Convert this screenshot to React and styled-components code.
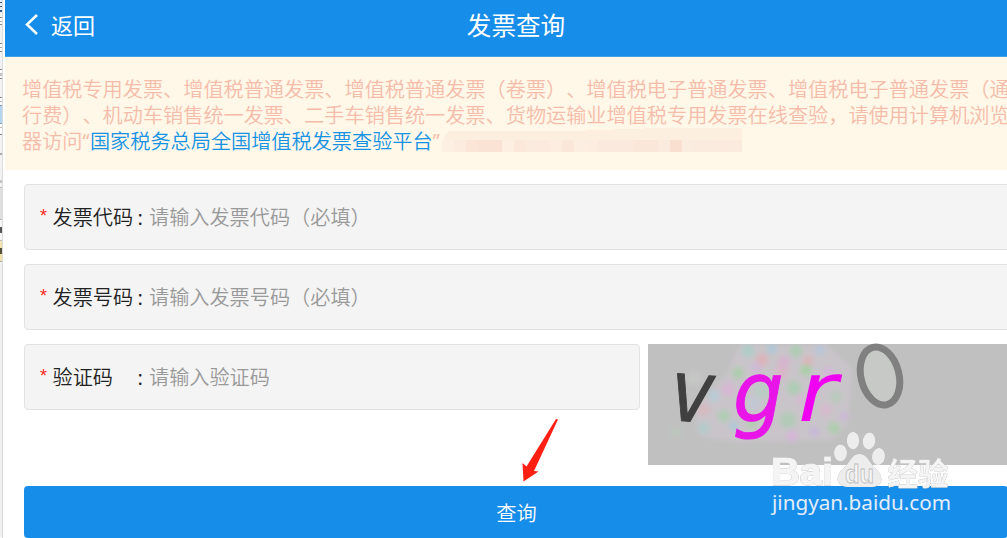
import React from 'react';
import styled, { createGlobalStyle } from 'styled-components';

const BLUE = '#178dea';

const GlobalStyle = createGlobalStyle`
  body {
    margin: 0;
    overflow: hidden;
    background: #fff;
    font-family: "Noto Sans CJK SC", sans-serif;
    font-kerning: none;
    text-spacing-trim: space-all;
  }

  * {
    box-sizing: border-box;
  }
`;

const Screen = styled.div`
  position: relative;
  display: flex;
  width: 1007px;
  height: 538px;
  overflow: hidden;
`;

const Edge = styled.aside`
  display: flex;
  flex-direction: column;
  flex: 0 0 3px;
  width: 3px;
  margin-right: 2px;
  overflow: hidden;
  border-right: 1px solid #dcdcdc;
`;

const EdgeCell = styled.i`
  flex: 0 0 auto;
  height: ${p => p.h}px;
  background: ${p => p.color};
`;

const Page = styled.main`
  flex: 0 0 1002px;
  width: 1002px;
  white-space: nowrap;
`;

const Header = styled.header`
  display: grid;
  grid-template-columns: 200px 1fr 200px;
  align-items: center;
  height: 57px;
  padding: 0 0 8px 20px;
  border-bottom: 1px solid #409fe9;
  background: ${BLUE};
  color: #fff;
`;

const Back = styled.a`
  display: flex;
  align-items: center;
  gap: 12px;
  font-size: 22px;
  line-height: 30px;
`;

const Title = styled.h1`
  margin: 0;
  font-size: 24.6px;
  font-weight: 400;
  line-height: 34px;
  text-align: center;
`;

const Notice = styled.section`
  height: 113px;
  padding: 19px 0 0 17px;
  background: #fff7e8;
  color: #f6bcaa;
  font-size: 20.16px;
  font-weight: 350;
  line-height: 26px;
`;

const NoticeLine = styled.div`
  display: flex;
  height: 26px;
`;

const Quote = styled.span`
  width: 7.5px;
  font-family: "Open Sans", sans-serif;
  font-size: 20px;
  font-weight: 400;
`;

const PlatformLink = styled.a`
  color: #1692e2;
`;

const Redacted = styled.svg`
  margin: -1px 0 0 2px;
`;

const Form = styled.form`
  display: flex;
  flex-direction: column;
  gap: 14px;
  padding: 14px 0 0 19px;
`;

const Field = styled.label`
  display: flex;
  flex: none;
  align-items: center;
  width: ${p => p.width || '1000px'};
  height: 66px;
  padding: 0 0 0 15px;
  border: 1px solid #e2e2e2;
  border-radius: 4px;
  background: #f4f4f4;
  font-size: 20.16px;
  font-weight: 350;
  line-height: 30px;
`;

const Star = styled.span`
  width: 12.5px;
  padding-bottom: 3px;
  color: #fb2a20;
  font-family: "Liberation Sans", sans-serif;
  font-size: 18px;
`;

const Label = styled.span`
  width: 85px;
  color: #222;
`;

const Colon = styled.span`
  width: 11.5px;
  color: #222;
`;

const Placeholder = styled.span`
  color: #999;
`;

const CodeRow = styled.div`
  display: flex;
  gap: 8px;
  height: 121px;
`;

const Captcha = styled.svg`
  flex: none;
  overflow: visible;
  background: #c0c0c0;
`;

const Submit = styled.button`
  width: 984px;
  height: 52px;
  margin-top: 7px;
  padding: 2px 0 0 1px;
  border: 0;
  border-radius: 4px;
  background: ${BLUE};
  color: #fff;
  font: 350 20.2px/50px "Noto Sans CJK SC", sans-serif;
`;

const Arrow = styled.svg`
  position: absolute;
  left: 520px;
  top: 416px;
`;

const Watermark = styled.svg`
  position: absolute;
  left: 766px;
  top: 424px;
`;

const Outlined = styled.g`
  filter: drop-shadow(0 0 0.7px #999);
`;

// slice of the window that shows behind the page
const edge = [
  [2, '#e9eef4'], [1, '#365f91'], [3, '#e9eef4'], [1, '#365f91'], [3, '#e9eef4'], [2, '#365f91'],
  [5, '#f2f2f2'], [1, '#888'], [3, '#fff'], [1, '#aaa'], [2, '#fff'], [1, '#888'],
  [18, '#f2f2f2'], [1, '#888'], [3, '#fff'], [1, '#aaa'], [3, '#fff'], [1, '#888'],
  [17, '#f2f2f2'], [1, '#888'], [3, '#fff'], [3, '#c4c4c4'], [2, '#fff'], [1, '#888'],
  [18, '#f2f2f2'], [1, '#888'], [3, '#fff'], [1, '#bbb'], [3, '#fff'], [1, '#7e9cb5'],
  [17, '#b5d4ee'], [1, '#7e9cb5'], [3, '#fff'], [1, '#bbb'], [6, '#fff'], [1, '#888'],
  [18, '#f2f2f2'], [2, '#aaa'], [25, '#f2f2f2'], [3, '#c4c4c4'], [4, '#f2f2f2'], [1, '#bbb'],
  [31, '#dedede'], [1, '#bbb'], [7, '#f5f5f5'], [6, '#555'], [7, '#f5f5f5'], [1, '#bbb'],
  [7, '#f2e3ad'], [6, '#554f38'], [7, '#f2e3ad'], [1, '#aaa'], [275, '#f0f0f0'],
];

const mosaic = [
  '#fcf0e2', '#fcecdf', '#fae5d7', '#fae2d4', '#fae2d4', '#fdf0e3', '#fbe8db', '#fbebde', '#fbeadd',
  '#fcede0', '#fbe7da', '#fceee1', '#fcede0', '#fbe9dd', '#fbe9dd', '#fbe9dd', '#fbe7d9', '#fbe7da',
  '#fbebde', '#f9dfd0', '#fbece0', '#fbebde', '#fbebde', '#fbeadd', '#fbebde',
];

// colour speckle around the captcha letters: x, y, radius, colour
const speckles = [
  [100, 7, 6, '#a5cfc6'], [114, 16, 6, '#e0aeb6'], [124, 5, 5, '#a9c8dc'], [136, 18, 6, '#d9b0cf'],
  [148, 7, 6, '#a6d0ac'], [160, 17, 5, '#e2afb5'], [172, 6, 5, '#b4c8dd'], [90, 29, 6, '#a5d1a8'],
  [108, 24, 5, '#cfb6dc'], [134, 28, 6, '#ddb3c8'], [158, 26, 6, '#a2d2a2'], [180, 28, 6, '#d5b6d8'],
  [80, 45, 7, '#d8b4d5'], [114, 47, 8, '#b6cec3'], [106, 60, 7, '#c0c9d6'], [146, 44, 7, '#a8cfb0'],
  [154, 56, 6, '#d8b6d5'], [188, 53, 6, '#b4ccb8'], [56, 66, 6, '#d9b6bd'], [66, 52, 6, '#b5cdd8'],
  [76, 72, 6, '#a8d0ae'], [86, 82, 5, '#aac9d8'], [104, 79, 5, '#a6d2a6'], [140, 76, 8, '#abcdb3'],
  [56, 84, 6, '#afccca'], [144, 92, 6, '#d6b4d8'], [178, 66, 6, '#dab6d0'], [186, 84, 6, '#a7cfa7'],
  [166, 88, 5, '#c8b4dc'], [28, 88, 6, '#bcc8be'], [46, 34, 7, '#c7c9c7'], [196, 72, 5, '#cdb8da'],
];

const FormField = ({ label, hint, width }) => (
  <Field width={width}>
    <Star>*</Star>
    <Label>{label}</Label>
    <Colon>:</Colon>
    <Placeholder>{hint}</Placeholder>
  </Field>
);

const CaptchaImage = () => (
  <Captcha width="360" height="121" viewBox="0 0 360 121">
    <defs>
      <clipPath id="frame">
        <rect width="360" height="121" />
      </clipPath>
      <filter id="soft" x="-10%" y="-10%" width="120%" height="120%">
        <feGaussianBlur stdDeviation="2.6" />
      </filter>
    </defs>
    <g clipPath="url(#frame)">
      <g filter="url(#soft)">
        <path d="M92 0H178L204 24L200 80L184 96L90 98L50 92L46 66L78 30Z" fill="#c9c4c9" />
        {speckles.map(([x, y, r, color]) => <circle key={`${x}-${y}`} cx={x} cy={y} r={r} fill={color} opacity="0.8" />)}
      </g>
    </g>
    <g fontFamily="DejaVu Sans" fontStyle="italic">
      <text transform="translate(21 76) rotate(4) scale(0.84 1)" fontSize="86" fill="#404040" stroke="#404040" strokeWidth="1">v</text>
      <text transform="translate(85 78) scale(0.95 1)" fontSize="84" fill="#e814e8" stroke="#e814e8" strokeWidth="1">g</text>
      <text transform="translate(150 77) scale(1.15 1)" fontSize="83" fill="#f000f0">r</text>
    </g>
    <ellipse cx="232" cy="32" rx="19" ry="29.500" transform="rotate(-14 232 32)" fill="#c7c9c7" stroke="#808080" strokeWidth="7" />
  </Captcha>
);

const BaiduMark = () => (
  <Watermark width="200" height="104" viewBox="0 0 200 104">
    <Outlined fill="#ededed">
      <ellipse cx="74.500" cy="29" rx="6.500" ry="8.500" />
      <ellipse cx="87" cy="16.500" rx="6.200" ry="8.800" />
      <ellipse cx="103" cy="17" rx="6.300" ry="8.500" transform="rotate(8 103 17)" />
      <ellipse cx="112.500" cy="32.500" rx="6.500" ry="8.500" transform="rotate(8 112.500 32.500)" />
      <path d="M93.500 30C101 30 103 38 109 44C118 52 118 62 106 63H82C69 62 69 51 78 44C84 38 86 30 93.500 30Z" />
    </Outlined>
    <text x="79" y="58.500" fill="#f4f4f4" stroke="#bdbdbd" strokeWidth="0.8" fontFamily="Liberation Sans" fontWeight="700" fontSize="25" textLength="29" lengthAdjust="spacingAndGlyphs">du</text>
    <Outlined fill="#f4f4f4" stroke="#f4f4f4">
      <text x="5" y="61" strokeWidth="1.2" fontFamily="Liberation Sans" fontWeight="700" fontSize="39" textLength="62" lengthAdjust="spacingAndGlyphs">Bai</text>
      <text x="121.500" y="60.500" strokeWidth="0.3" fontFamily="Noto Sans CJK SC" fontWeight="700" fontSize="30.500" textLength="61">经验</text>
    </Outlined>
    <text x="6" y="86" fill="#e3eefa" fontFamily="Noto Sans" fontSize="20.500" textLength="179" lengthAdjust="spacingAndGlyphs">jingyan.baidu.com</text>
  </Watermark>
);

const App = () => (
  <Screen>
    <GlobalStyle />
    <Edge>
      {edge.map(([h, color], i) => <EdgeCell key={i} h={h} color={color} />)}
    </Edge>
    <Page>
      <Header>
        <Back>
          <svg width="14" height="22" viewBox="0 0 14 22" fill="none" stroke="#fff" strokeWidth="2.500">
            <path d="M12 2L2 11.500L12 21" />
          </svg>
          返回
        </Back>
        <Title>发票查询</Title>
      </Header>
      <Notice>
        <NoticeLine>增值税专用发票、增值税普通发票、增值税普通发票（卷票）、增值税电子普通发票、增值税电子普通发票（通</NoticeLine>
        <NoticeLine>行费）、机动车销售统一发票、二手车销售统一发票、货物运输业增值税专用发票在线查验，请使用计算机浏览</NoticeLine>
        <NoticeLine>
          <span>器访问</span>
          <Quote>“</Quote>
          <PlatformLink>国家税务总局全国增值税发票查验平台</PlatformLink>
          <Quote>”</Quote>
          <Redacted width="300" height="25" shapeRendering="crispEdges">
            <path d="M2 12Q4 3 12 4H130L215 1H300V25H2Z" fill="#fcefe0" />
            {mosaic.map((color, i) => <rect key={i} x={i * 12} y="13" width="12" height="12" fill={color} />)}
          </Redacted>
        </NoticeLine>
      </Notice>
      <Form>
        <FormField label="发票代码" hint="请输入发票代码（必填）" />
        <FormField label="发票号码" hint="请输入发票号码（必填）" />
        <CodeRow>
          <FormField label="验证码" hint="请输入验证码" width="616px" />
          <CaptchaImage />
        </CodeRow>
        <Submit type="button">查询</Submit>
      </Form>
    </Page>
    <Arrow width="42" height="68" viewBox="0 0 42 68">
      <path d="M36 3L38 3.500L14 55L18.500 55.500L3.500 65.500L2.500 47L6.500 50.500Z" fill="#ff2013" />
    </Arrow>
    <BaiduMark />
  </Screen>
);

export default App;
